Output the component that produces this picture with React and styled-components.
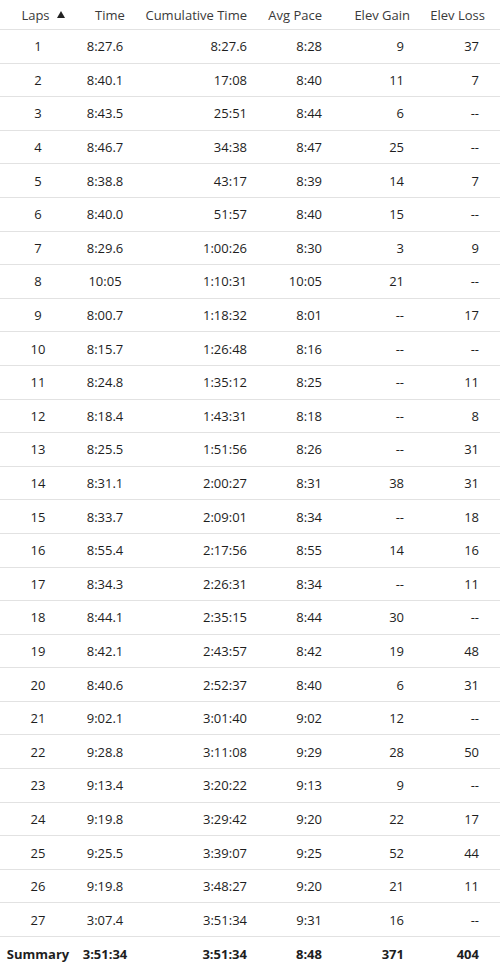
import React from "react";
import styled, { createGlobalStyle } from "styled-components";

const Global = createGlobalStyle`
  html, body { margin: 0; padding: 0; background: #fff; }
  body { font-family: "Open Sans", "Noto Sans", sans-serif; color: #1e1e1e; }
`;

const rows = [
  ["1", "8:27.6", "8:27.6", "8:28", "9", "37"],
  ["2", "8:40.1", "17:08", "8:40", "11", "7"],
  ["3", "8:43.5", "25:51", "8:44", "6", "--"],
  ["4", "8:46.7", "34:38", "8:47", "25", "--"],
  ["5", "8:38.8", "43:17", "8:39", "14", "7"],
  ["6", "8:40.0", "51:57", "8:40", "15", "--"],
  ["7", "8:29.6", "1:00:26", "8:30", "3", "9"],
  ["8", "10:05", "1:10:31", "10:05", "21", "--"],
  ["9", "8:00.7", "1:18:32", "8:01", "--", "17"],
  ["10", "8:15.7", "1:26:48", "8:16", "--", "--"],
  ["11", "8:24.8", "1:35:12", "8:25", "--", "11"],
  ["12", "8:18.4", "1:43:31", "8:18", "--", "8"],
  ["13", "8:25.5", "1:51:56", "8:26", "--", "31"],
  ["14", "8:31.1", "2:00:27", "8:31", "38", "31"],
  ["15", "8:33.7", "2:09:01", "8:34", "--", "18"],
  ["16", "8:55.4", "2:17:56", "8:55", "14", "16"],
  ["17", "8:34.3", "2:26:31", "8:34", "--", "11"],
  ["18", "8:44.1", "2:35:15", "8:44", "30", "--"],
  ["19", "8:42.1", "2:43:57", "8:42", "19", "48"],
  ["20", "8:40.6", "2:52:37", "8:40", "6", "31"],
  ["21", "9:02.1", "3:01:40", "9:02", "12", "--"],
  ["22", "9:28.8", "3:11:08", "9:29", "28", "50"],
  ["23", "9:13.4", "3:20:22", "9:13", "9", "--"],
  ["24", "9:19.8", "3:29:42", "9:20", "22", "17"],
  ["25", "9:25.5", "3:39:07", "9:25", "52", "44"],
  ["26", "9:19.8", "3:48:27", "9:20", "21", "11"],
  ["27", "3:07.4", "3:51:34", "9:31", "16", "--"],
];

const summary = ["Summary", "3:51:34", "3:51:34", "8:48", "371", "404"];

const Table = styled.div`
  width: 500px;
  display: flex;
  flex-direction: column;
`;

const Row = styled.div`
  display: grid;
  grid-template-columns: 76px 58px 121px 75px 86px 84px;
  align-items: center;
  box-sizing: border-box;
  height: ${(p) => (p.$header ? "30px" : "33.6px")};
  border-bottom: ${(p) => (p.$last ? "none" : "1px solid #e2e2e2")};
  font-size: 13px;
  font-weight: ${(p) => (p.$bold ? 700 : 400)};
  color: ${(p) => (p.$header ? "#3a3a3a" : "#1e1e1e")};
`;

const Cell = styled.div`
  text-align: ${(p) => p.$align || "right"};
  padding-right: ${(p) => p.$pr || 0}px;
  padding-left: ${(p) => p.$pl || 0}px;
  white-space: nowrap;
  line-height: 18px;
`;

const Arrow = styled.span`
  display: inline-block;
  width: 0;
  height: 0;
  margin-left: 7px;
  vertical-align: 2px;
  border-left: 4px solid transparent;
  border-right: 4px solid transparent;
  border-bottom: 7px solid #222;
`;

const valueCols = [
  { $align: "center" },
  { $align: "center", $pl: 0 },
  { $pr: 8 },
  { $pr: 8 },
  { $pr: 12 },
  { $pr: 21 },
];

const headCols = [
  { $align: "center", $pl: 10 },
  { $align: "center", $pl: 10 },
  { $pr: 8 },
  { $pr: 8 },
  { $pr: 6 },
  { $pr: 15 },
];

export default function App() {
  return (
    <>
      <Global />
      <Table>
        <Row $header>
          <Cell {...headCols[0]}>
            Laps<Arrow />
          </Cell>
          <Cell {...headCols[1]}>Time</Cell>
          <Cell {...headCols[2]}>Cumulative Time</Cell>
          <Cell {...headCols[3]}>Avg Pace</Cell>
          <Cell {...headCols[4]}>Elev Gain</Cell>
          <Cell {...headCols[5]}>Elev Loss</Cell>
        </Row>
        {rows.map((r) => (
          <Row key={r[0]}>
            {r.map((v, i) => (
              <Cell key={i} {...valueCols[i]}>
                {v}
              </Cell>
            ))}
          </Row>
        ))}
        <Row $bold $last>
          {summary.map((v, i) => (
            <Cell key={i} {...valueCols[i]}>
              {v}
            </Cell>
          ))}
        </Row>
      </Table>
    </>
  );
}
